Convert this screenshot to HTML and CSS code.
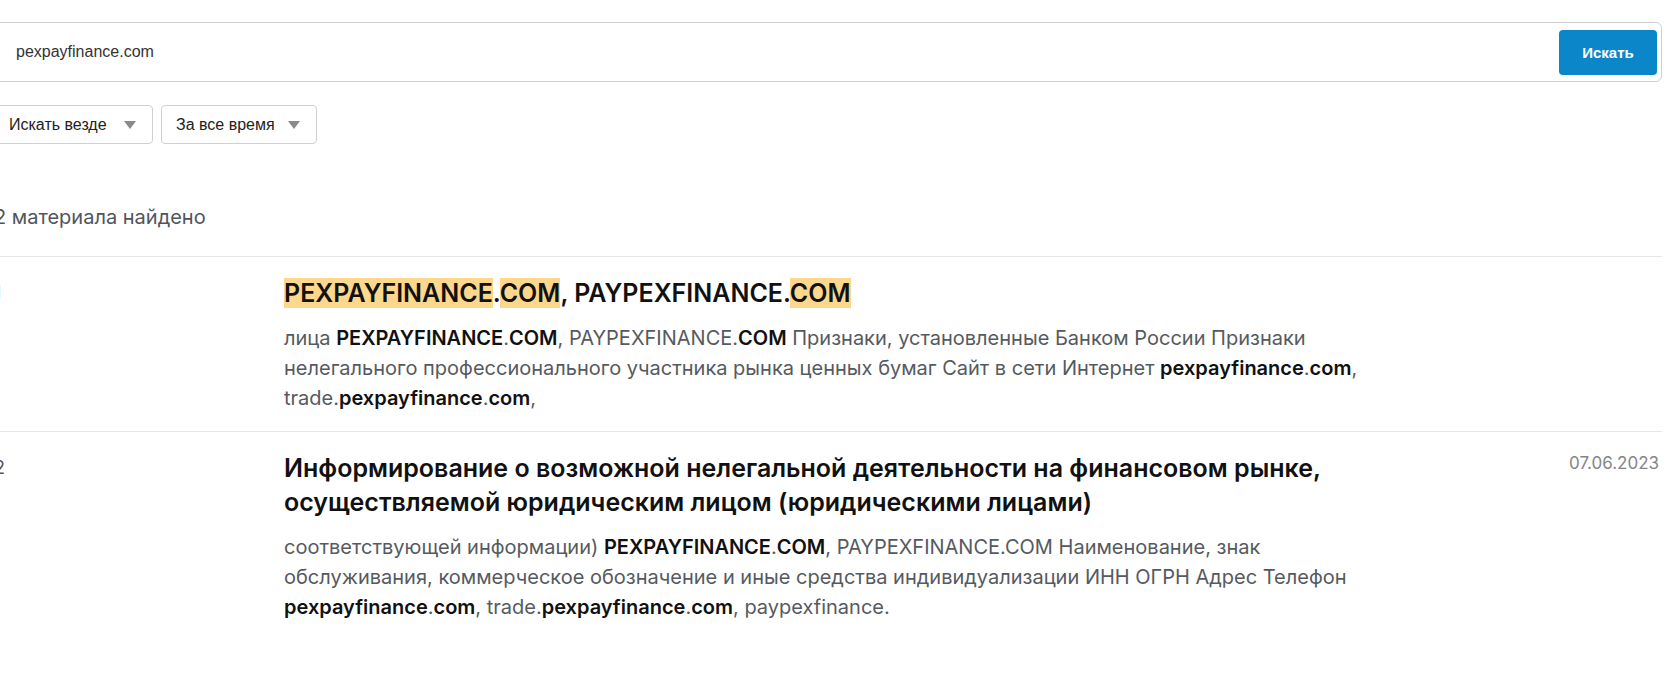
FILE: index.html
```html
<!DOCTYPE html>
<html lang="ru">
<head>
    <meta charset="UTF-8">
    <title>Поиск</title>
    <link rel="stylesheet" href="styles.css">
</head>
<body>
    <div class="page">
        <form class="search-box">
            <input type="text" class="search-input" value="pexpayfinance.com">
            <button type="button" class="search-button">Искать</button>
        </form>

        <div class="filters">
            <div class="dropdown dropdown-where">
                <span>Искать везде</span>
                <span class="arrow"></span>
            </div>
            <div class="dropdown dropdown-when">
                <span>За все время</span>
                <span class="arrow"></span>
            </div>
        </div>

        <p class="results-count">2 материала найдено</p>

        <div class="results">
            <div class="result">
                <div class="result-num">1</div>
                <div class="result-body">
                    <h3 class="result-title"><mark>PEXPAYFINANCE</mark>.<mark>COM</mark>, PAYPEXFINANCE.<mark>COM</mark></h3>
                    <p class="result-text">лица <b>PEXPAYFINANCE</b>.<b>COM</b>, PAYPEXFINANCE.<b>COM</b> Признаки, установленные Банком России Признаки<br>нелегального профессионального участника рынка ценных бумаг Сайт в сети Интернет <b>pexpayfinance</b>.<b>com</b>,<br>trade.<b>pexpayfinance</b>.<b>com</b>,</p>
                </div>
                <div class="result-date"></div>
            </div>
            <div class="result">
                <div class="result-num">2</div>
                <div class="result-body">
                    <h3 class="result-title">Информирование о возможной нелегальной деятельности на финансовом рынке,<br>осуществляемой юридическим лицом (юридическими лицами)</h3>
                    <p class="result-text">соответствующей информации) <b>PEXPAYFINANCE</b>.<b>COM</b>, PAYPEXFINANCE.COM Наименование, знак<br>обслуживания, коммерческое обозначение и иные средства индивидуализации ИНН ОГРН Адрес Телефон<br><b>pexpayfinance</b>.<b>com</b>, trade.<b>pexpayfinance</b>.<b>com</b>, paypexfinance.</p>
                </div>
                <div class="result-date">07.06.2023</div>
            </div>
        </div>
    </div>
</body>
</html>
```

FILE: styles.css
```css
body {
    margin: 0;
    padding: 0;
    background: #fff;
    font-family: Inter, "Noto Sans", sans-serif;
    color: #1a1a1a;
    overflow: hidden;
}
.page {
    width: 1668px;
    margin-left: -6px;
    padding-top: 22px;
}
.search-box {
    display: flex;
    align-items: center;
    height: 60px;
    box-sizing: border-box;
    border: 1px solid #cfcfcf;
    border-radius: 6px;
    padding: 0 4px 0 21px;
}
.search-input {
    flex: 1;
    border: none;
    outline: none;
    padding: 0;
    font-family: "Liberation Sans", Arial, sans-serif;
    font-size: 16px;
    color: #333;
    background: transparent;
}
.search-button {
    width: 98px;
    height: 45px;
    border: none;
    border-radius: 4px;
    background-color: #0a86c9;
    color: #fff;
    font-family: "Liberation Sans", Arial, sans-serif;
    font-weight: bold;
    font-size: 15px;
    cursor: pointer;
}
.filters {
    display: flex;
    gap: 8px;
    margin-top: 23px;
}
.dropdown {
    display: flex;
    align-items: center;
    justify-content: space-between;
    height: 39px;
    box-sizing: border-box;
    border: 1px solid #d0d0d0;
    border-radius: 4px;
    padding: 0 16px 0 14px;
    font-family: "Liberation Sans", Arial, sans-serif;
    font-size: 16px;
    color: #222;
}
.dropdown-where {
    width: 159px;
}
.dropdown-when {
    width: 156px;
}
.arrow {
    width: 0;
    height: 0;
    border-left: 6px solid transparent;
    border-right: 6px solid transparent;
    border-top: 8px solid #8a8a8a;
}
.results-count {
    margin: 0;
    padding: 60px 0 26px;
    font-size: 20px;
    line-height: 26px;
    color: #4f555c;
}
.result {
    display: flex;
    border-top: 1px solid #e6e6e6;
    padding: 19px 3px 18px 0;
}
.result-num {
    width: 290px;
    flex-shrink: 0;
    font-size: 18px;
    line-height: 34px;
    color: #4f555c;
}
.result-body {
    flex: 1;
}
.result-title {
    margin: 0 0 13px;
    font-size: 25px;
    line-height: 34px;
    font-weight: 600;
    color: #111;
}
.result-title mark {
    background-color: #fcd78c;
    color: #111;
}
.result-text {
    margin: 0;
    font-size: 20px;
    line-height: 30px;
    color: #555a61;
}
.result-text b {
    font-weight: 600;
    color: #111;
}
.result-date {
    font-size: 17px;
    line-height: 24px;
    color: #858585;
}
```
